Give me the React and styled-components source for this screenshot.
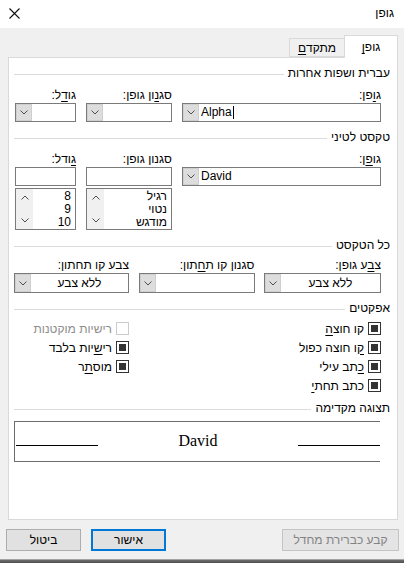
import styled, { createGlobalStyle } from "styled-components";

const GlobalStyle = createGlobalStyle`
  html, body {
    margin: 0;
    padding: 0;
    background: #ffffff;
  }
  * {
    box-sizing: border-box;
  }
`;

const font = `"Liberation Sans", "DejaVu Sans", sans-serif`;

// 드롭다운 화살표
const Chevron = ({ up }) => (
  <svg width="8" height="5" viewBox="0 0 8 5">
    <polyline
      points={up ? "0.5,4.5 4,1 7.5,4.5" : "0.5,0.5 4,4 7.5,0.5"}
      fill="none"
      stroke="#4d4d4d"
      strokeWidth="1"
    />
  </svg>
);

const Combo = ({ value, latin, center }) => (
  <ComboBox>
    <ComboText $latin={latin} $center={center}>
      {value}
      {value === "Alpha" && <Caret />}
    </ComboText>
    <DropButton>
      <Chevron />
    </DropButton>
  </ComboBox>
);

const ListBox = ({ items }) => (
  <List>
    <ListItems>
      {items.map((item) => (
        <ListItem key={item}>{item}</ListItem>
      ))}
    </ListItems>
    <ScrollColumn>
      <Chevron up />
      <Chevron />
    </ScrollColumn>
  </List>
);

const Check = ({ label, disabled }) => (
  <CheckRow $disabled={disabled}>
    <CheckBox $disabled={disabled}>{!disabled && <CheckFill />}</CheckBox>
    <span>{label}</span>
  </CheckRow>
);

const Section = ({ title }) => (
  <SectionHeader>
    <span>{title}</span>
    <SectionLine />
  </SectionHeader>
);

const App = () => {
  return (
    <>
      <GlobalStyle />
      <Window dir="rtl">
        <TitleBar>
          <Title>גופן</Title>
          <svg width="11" height="11" viewBox="0 0 11 11">
            <path d="M0.5 0.5 L10.5 10.5 M10.5 0.5 L0.5 10.5" stroke="#111" strokeWidth="1.1" />
          </svg>
        </TitleBar>

        <Body>
          <Tabs>
            <Tab $active>
              גופ<u>ן</u>
            </Tab>
            <Tab>
              מתקד<u>ם</u>
            </Tab>
          </Tabs>

          <Panel>
            <Section title="עברית ושפות אחרות" />
            <FontGrid>
              <Field>
                <Label>
                  ג<u>ו</u>פן:
                </Label>
                <Combo value="Alpha" latin />
              </Field>
              <Field>
                <Label>
                  סג<u>נ</u>ון גופן:
                </Label>
                <Combo value="" />
              </Field>
              <Field>
                <Label>
                  גו<u>ד</u>ל:
                </Label>
                <Combo value="" />
              </Field>
            </FontGrid>

            <Section title="טקסט לטיני" />
            <FontGrid>
              <Field>
                <Label>
                  גו<u>פ</u>ן:
                </Label>
                <Combo value="David" latin />
              </Field>
              <Field>
                <Label>סגנון גופן:</Label>
                <TextBox />
                <ListBox items={["רגיל", "נטוי", "מודגש"]} />
              </Field>
              <Field>
                <Label>
                  <u>ג</u>ודל:
                </Label>
                <TextBox />
                <ListBox items={["8", "9", "10"]} />
              </Field>
            </FontGrid>

            <Section title="כל הטקסט" />
            <ColorGrid>
              <Field>
                <Label>
                  צ<u>ב</u>ע גופן:
                </Label>
                <Combo value="ללא צבע" center />
              </Field>
              <Field>
                <Label>
                  סגנון קו ת<u>ח</u>תון:
                </Label>
                <Combo value="" />
              </Field>
              <Field>
                <Label>צבע קו תחתון:</Label>
                <Combo value="ללא צבע" center />
              </Field>
            </ColorGrid>

            <Section title="אפקטים" />
            <EffectsGrid>
              <Check label={<>קו חוצ<u>ה</u></>} />
              <Check label="רישיות מוקטנות" disabled />
              <Check label={<><u>ק</u>ו חוצה כפול</>} />
              <Check label={<>רי<u>ש</u>יות בלבד</>} />
              <Check label={<><u>כ</u>תב עילי</>} />
              <Check label={<>מוס<u>ת</u>ר</>} />
              <Check label={<>כתב תחת<u>י</u></>} />
            </EffectsGrid>

            <Section title="תצוגה מקדימה" />
            <Preview>
              <PreviewRule />
              <PreviewText>David</PreviewText>
              <PreviewRule />
            </Preview>
          </Panel>

          <ButtonRow>
            <Button $disabled $wide>
              קבע כברירת מחדל
            </Button>
            <Spacer />
            <Button $primary>אישור</Button>
            <Button>ביטול</Button>
          </ButtonRow>
        </Body>
        <Shadow />
      </Window>
    </>
  );
};

export default App;

const Window = styled.div`
  width: 404px;
  height: 563px;
  display: flex;
  flex-direction: column;
  font-family: ${font};
  font-size: 12px;
  color: #000;
  overflow: hidden;
`;

const TitleBar = styled.div`
  height: 28px;
  flex: none;
  background: #ffffff;
  display: flex;
  align-items: center;
  justify-content: space-between;
  padding: 0 10px 2px 9px;
`;

const Title = styled.span`
  font-size: 12px;
`;

const Body = styled.div`
  flex: 1;
  background: #f0f0f0;
  padding: 7px 6px 0 8px;
  display: flex;
  flex-direction: column;
  border-bottom: 1px solid #a3a3a3;
`;

const Shadow = styled.div`
  height: 3px;
  flex: none;
  background: linear-gradient(#6e6e6e, #4f4f4f);
`;

const Tabs = styled.div`
  display: flex;
  align-items: flex-end;
  height: 22px;
`;

const Tab = styled.div`
  position: relative;
  z-index: ${(p) => (p.$active ? 1 : 0)};
  height: ${(p) => (p.$active ? "23px" : "19px")};
  margin-bottom: ${(p) => (p.$active ? "-1px" : "0")};
  width: ${(p) => (p.$active ? "54px" : "56px")};
  margin-right: ${(p) => (p.$active ? "0" : "-1px")};
  background: ${(p) => (p.$active ? "#ffffff" : "#f0f0f0")};
  border: 1px solid #d9d9d9;
  border-bottom: ${(p) => (p.$active ? "none" : "1px solid #d9d9d9")};
  display: flex;
  align-items: center;
  justify-content: center;
  padding-top: ${(p) => (p.$active ? "0" : "1px")};

  u {
    text-underline-offset: 2px;
  }
`;

const Panel = styled.div`
  height: 463px;
  flex: none;
  background: #ffffff;
  border: 1px solid #d9d9d9;
  padding: 8px 7px 0 5px;
  display: flex;
  flex-direction: column;
`;

const SectionHeader = styled.div`
  display: flex;
  align-items: center;
  gap: 4px;
  line-height: 15px;
  white-space: nowrap;
`;

const SectionLine = styled.div`
  flex: 1;
  height: 1px;
  background: #dcdcdc;
  margin-top: 1px;
`;

const FontGrid = styled.div`
  display: grid;
  grid-template-columns: 199px 86px 61px;
  column-gap: 10px;
  margin: 7px 9px 8px 0;
  align-items: start;
`;

const ColorGrid = styled.div`
  display: grid;
  grid-template-columns: 117px 116px 115px;
  column-gap: 9.5px;
  margin: 5px 9px 8px 0;
`;

const Field = styled.div`
  display: flex;
  flex-direction: column;
`;

const Label = styled.div`
  line-height: 15px;
  white-space: nowrap;

  u {
    text-underline-offset: 2px;
  }
`;

const ComboBox = styled.div`
  height: 19px;
  border: 1px solid #7a7a7a;
  display: flex;
  background: #fff;

  ${ColorGrid} & {
    height: 20px;
  }
`;

const ComboText = styled.div`
  flex: 1;
  display: flex;
  align-items: center;
  justify-content: ${(p) => (p.$center ? "center" : "flex-start")};
  direction: ${(p) => (p.$latin ? "ltr" : "rtl")};
  padding: 0 2px;
  line-height: 15px;
`;

const Caret = styled.span`
  display: inline-block;
  width: 1px;
  height: 13px;
  background: #000;
  margin-left: 1px;
`;

const DropButton = styled.div`
  width: 16px;
  flex: none;
  background: #dddddd;
  border: 1px solid #cfcfcf;
  display: flex;
  align-items: center;
  justify-content: center;
`;

const TextBox = styled.div`
  height: 19px;
  border: 1px solid #7a7a7a;
  background: #fff;
`;

const List = styled.div`
  margin-top: 2px;
  height: 42px;
  border: 1px solid #7a7a7a;
  display: flex;
  background: #fff;
`;

const ListItems = styled.div`
  flex: 1;
  padding: 1px 4px 0 0;
  display: flex;
  flex-direction: column;
`;

const ListItem = styled.div`
  line-height: 13px;
  height: 13px;
`;

const ScrollColumn = styled.div`
  width: 17px;
  flex: none;
  background: #f0f0f0;
  display: flex;
  flex-direction: column;
  align-items: center;
  justify-content: space-between;
  padding: 6px 0 6px;
`;

const EffectsGrid = styled.div`
  display: grid;
  grid-template-columns: 1fr 115px;
  column-gap: 10px;
  grid-auto-rows: 19px;
  margin: 3px 9px 6px 0;
`;

const CheckRow = styled.div`
  display: flex;
  align-items: center;
  gap: 4px;
  color: ${(p) => (p.$disabled ? "#8d8d8d" : "#000")};
  white-space: nowrap;

  u {
    text-underline-offset: 2px;
  }
`;

const CheckBox = styled.div`
  width: 13px;
  height: 13px;
  flex: none;
  border: 1px solid ${(p) => (p.$disabled ? "#cccccc" : "#333333")};
  background: #fff;
  display: flex;
  align-items: center;
  justify-content: center;
`;

const CheckFill = styled.div`
  width: 7px;
  height: 7px;
  background: #333333;
`;

const Preview = styled.div`
  margin: 5px 10px 0 0;
  height: 41px;
  border: 1px solid #6d6d6d;
  border-right: none;
  display: flex;
  align-items: center;
  direction: ltr;
  padding: 0 0 0 1px;
`;

const PreviewRule = styled.div`
  width: 82px;
  height: 1px;
  background: #000;
  margin-top: 8px;
`;

const PreviewText = styled.div`
  flex: 1;
  text-align: center;
  font-family: "Liberation Serif", "DejaVu Serif", serif;
  font-size: 16px;
  margin-top: -2px;
`;

const ButtonRow = styled.div`
  display: flex;
  margin: 9px -1px 0 -2px;
  gap: 10px;
`;

const Spacer = styled.div`
  flex: 1;
`;

const Button = styled.div`
  width: ${(p) => (p.$wide ? "117px" : "75px")};
  height: 22px;
  background: ${(p) => (p.$disabled ? "#e4e4e4" : "#e1e1e1")};
  border: ${(p) =>
    p.$primary ? "2px solid #0078d7" : p.$disabled ? "1px solid #c4c4c4" : "1px solid #adadad"};
  color: ${(p) => (p.$disabled ? "#838383" : "#000")};
  display: flex;
  align-items: center;
  justify-content: center;
  white-space: nowrap;
`;
